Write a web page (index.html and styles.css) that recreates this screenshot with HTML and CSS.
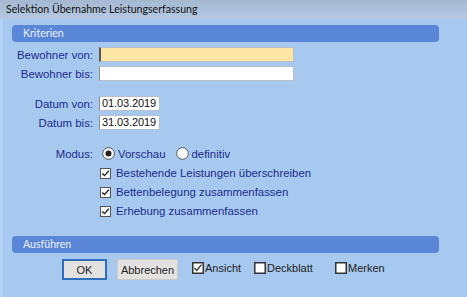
FILE: index.html
```html
<!DOCTYPE html>
<html lang="de">
  <head>
    <meta charset="UTF-8" />
    <title>Selektion Übernahme Leistungserfassung</title>
    <link rel="stylesheet" href="styles.css">
  </head>
  <body>
    <div class="titlebar">Selektion Übernahme Leistungserfassung</div>
    <section class="dialog">
      <div class="head">Kriterien</div>
      <div class="row first">
        <label>Bewohner von:</label>
        <span class="field wide yellow"></span>
      </div>
      <div class="row">
        <label>Bewohner bis:</label>
        <span class="field wide"></span>
      </div>
      <div class="row gap">
        <label>Datum von:</label>
        <span class="field date">01.03.2019</span>
      </div>
      <div class="row">
        <label>Datum bis:</label>
        <span class="field date">31.03.2019</span>
      </div>
      <div class="row modus">
        <label>Modus:</label>
        <span class="opt">
          <svg width="13" height="13" viewBox="0 0 13 13"><circle cx="6.5" cy="6.5" r="5.8" fill="#fff" stroke="#555"/><circle cx="6.5" cy="6.5" r="3" fill="#222"/></svg>
          Vorschau
        </span>
        <span class="opt">
          <svg width="13" height="13" viewBox="0 0 13 13"><circle cx="6.5" cy="6.5" r="5.8" fill="#fff" stroke="#555"/></svg>
          definitiv
        </span>
      </div>
      <div class="checks">
        <span class="opt">
          <svg width="11" height="11" viewBox="0 0 11 11"><rect x="0.5" y="0.5" width="10" height="10" fill="#fff" stroke="#555"/><path d="M2.3 5.4 L4.5 7.6 L8.8 2.8" fill="none" stroke="#222" stroke-width="1.4"/></svg>
          Bestehende Leistungen überschreiben
        </span>
        <span class="opt">
          <svg width="11" height="11" viewBox="0 0 11 11"><rect x="0.5" y="0.5" width="10" height="10" fill="#fff" stroke="#555"/><path d="M2.3 5.4 L4.5 7.6 L8.8 2.8" fill="none" stroke="#222" stroke-width="1.4"/></svg>
          Bettenbelegung zusammenfassen
        </span>
        <span class="opt">
          <svg width="11" height="11" viewBox="0 0 11 11"><rect x="0.5" y="0.5" width="10" height="10" fill="#fff" stroke="#555"/><path d="M2.3 5.4 L4.5 7.6 L8.8 2.8" fill="none" stroke="#222" stroke-width="1.4"/></svg>
          Erhebung zusammenfassen
        </span>
      </div>
      <div class="head run">Ausführen</div>
      <div class="actions">
        <button class="btn ok">OK</button>
        <button class="btn">Abbrechen</button>
        <span class="box first-box">
          <svg width="12" height="12" viewBox="0 0 12 12"><rect x="0.75" y="0.75" width="10.5" height="10.5" fill="#fff" stroke="#333" stroke-width="1.5"/><path d="M2.5 6 L4.8 8.5 L9.5 2.6" fill="none" stroke="#333" stroke-width="1.3"/></svg>Ansicht
        </span>
        <span class="box deck">
          <svg width="12" height="12" viewBox="0 0 12 12"><rect x="0.75" y="0.75" width="10.5" height="10.5" fill="#fff" stroke="#333" stroke-width="1.5"/></svg>Deckblatt
        </span>
        <span class="box">
          <svg width="12" height="12" viewBox="0 0 12 12"><rect x="0.75" y="0.75" width="10.5" height="10.5" fill="#fff" stroke="#333" stroke-width="1.5"/></svg>Merken
        </span>
      </div>
    </section>
  </body>
</html>
```

FILE: styles.css
```css
* {
  margin: 0;
  padding: 0;
  box-sizing: border-box;
}
body {
  width: 467px;
  height: 297px;
  overflow: hidden;
  background: #a7c9ef;
  font-family: "Liberation Sans", Arial, sans-serif;
  font-size: 11.4px;
  color: #1b2a8c;
}
.titlebar {
  height: 19px;
  padding: 3px 0 0 6px;
  background: linear-gradient(#a6b8d1, #b4c9e4);
  font-family: Lato, "Noto Sans", sans-serif;
  font-size: 10.6px;
  color: #111;
}
.dialog {
  height: 278px;
  padding: 6px 0 0 9px;
  border-left: 3px solid #b3d2f4;
}
.head {
  width: 427px;
  height: 17px;
  background: #5a86d8;
  border-radius: 4px;
  padding: 2px 0 0 11px;
  font-family: Lato, "Noto Sans", sans-serif;
  font-size: 10.6px;
  color: #eef3ff;
}
.row {
  display: flex;
  align-items: center;
  height: 15px;
  margin-top: 4px;
}
.row.first {
  margin-top: 5px;
}
.row.gap {
  margin-top: 15px;
}
.row label {
  width: 81px;
  margin-right: 6px;
  text-align: right;
}
.field {
  height: 15px;
  background: #fff;
  border: 1px solid #b7bfca;
  border-left-color: #8a8f98;
  color: #111;
  padding: 0 2px;
  line-height: 13px;
}
.field.wide {
  width: 195px;
}
.field.yellow {
  background: #fde5a5;
  border-left: 2px solid #555;
}
.field.date {
  width: 61px;
  font-size: 11px;
  letter-spacing: -0.1px;
}
.row.modus {
  margin-top: 16px;
}
.opt {
  display: flex;
  align-items: center;
  gap: 3px;
}
.modus .opt {
  margin-right: 10px;
}
.modus label {
  margin-right: 9px;
}
.checks {
  display: flex;
  flex-direction: column;
  gap: 7px;
  padding: 6px 0 0 88px;
}
.checks .opt {
  height: 12px;
  gap: 5px;
}
.head.run {
  margin-top: 19px;
}
.actions {
  display: flex;
  align-items: center;
  height: 21px;
  margin-top: 6px;
  padding-left: 50px;
}
.btn {
  width: 45px;
  height: 21px;
  background: #e4e2e0;
  border: 1px solid #c9c9c9;
  font-family: "Liberation Sans", Arial, sans-serif;
  font-size: 11px;
  color: #222;
}
.btn.ok {
  border: 2px solid #2f6fbf;
  margin-right: 10px;
}
.btn + .btn {
  width: 61px;
}
.box {
  display: flex;
  align-items: center;
  gap: 1px;
  font-size: 11px;
  color: #222;
  margin-top: -3px;
}
.first-box {
  margin-left: 14px;
  width: 62px;
}
.deck {
  width: 81px;
}
```
